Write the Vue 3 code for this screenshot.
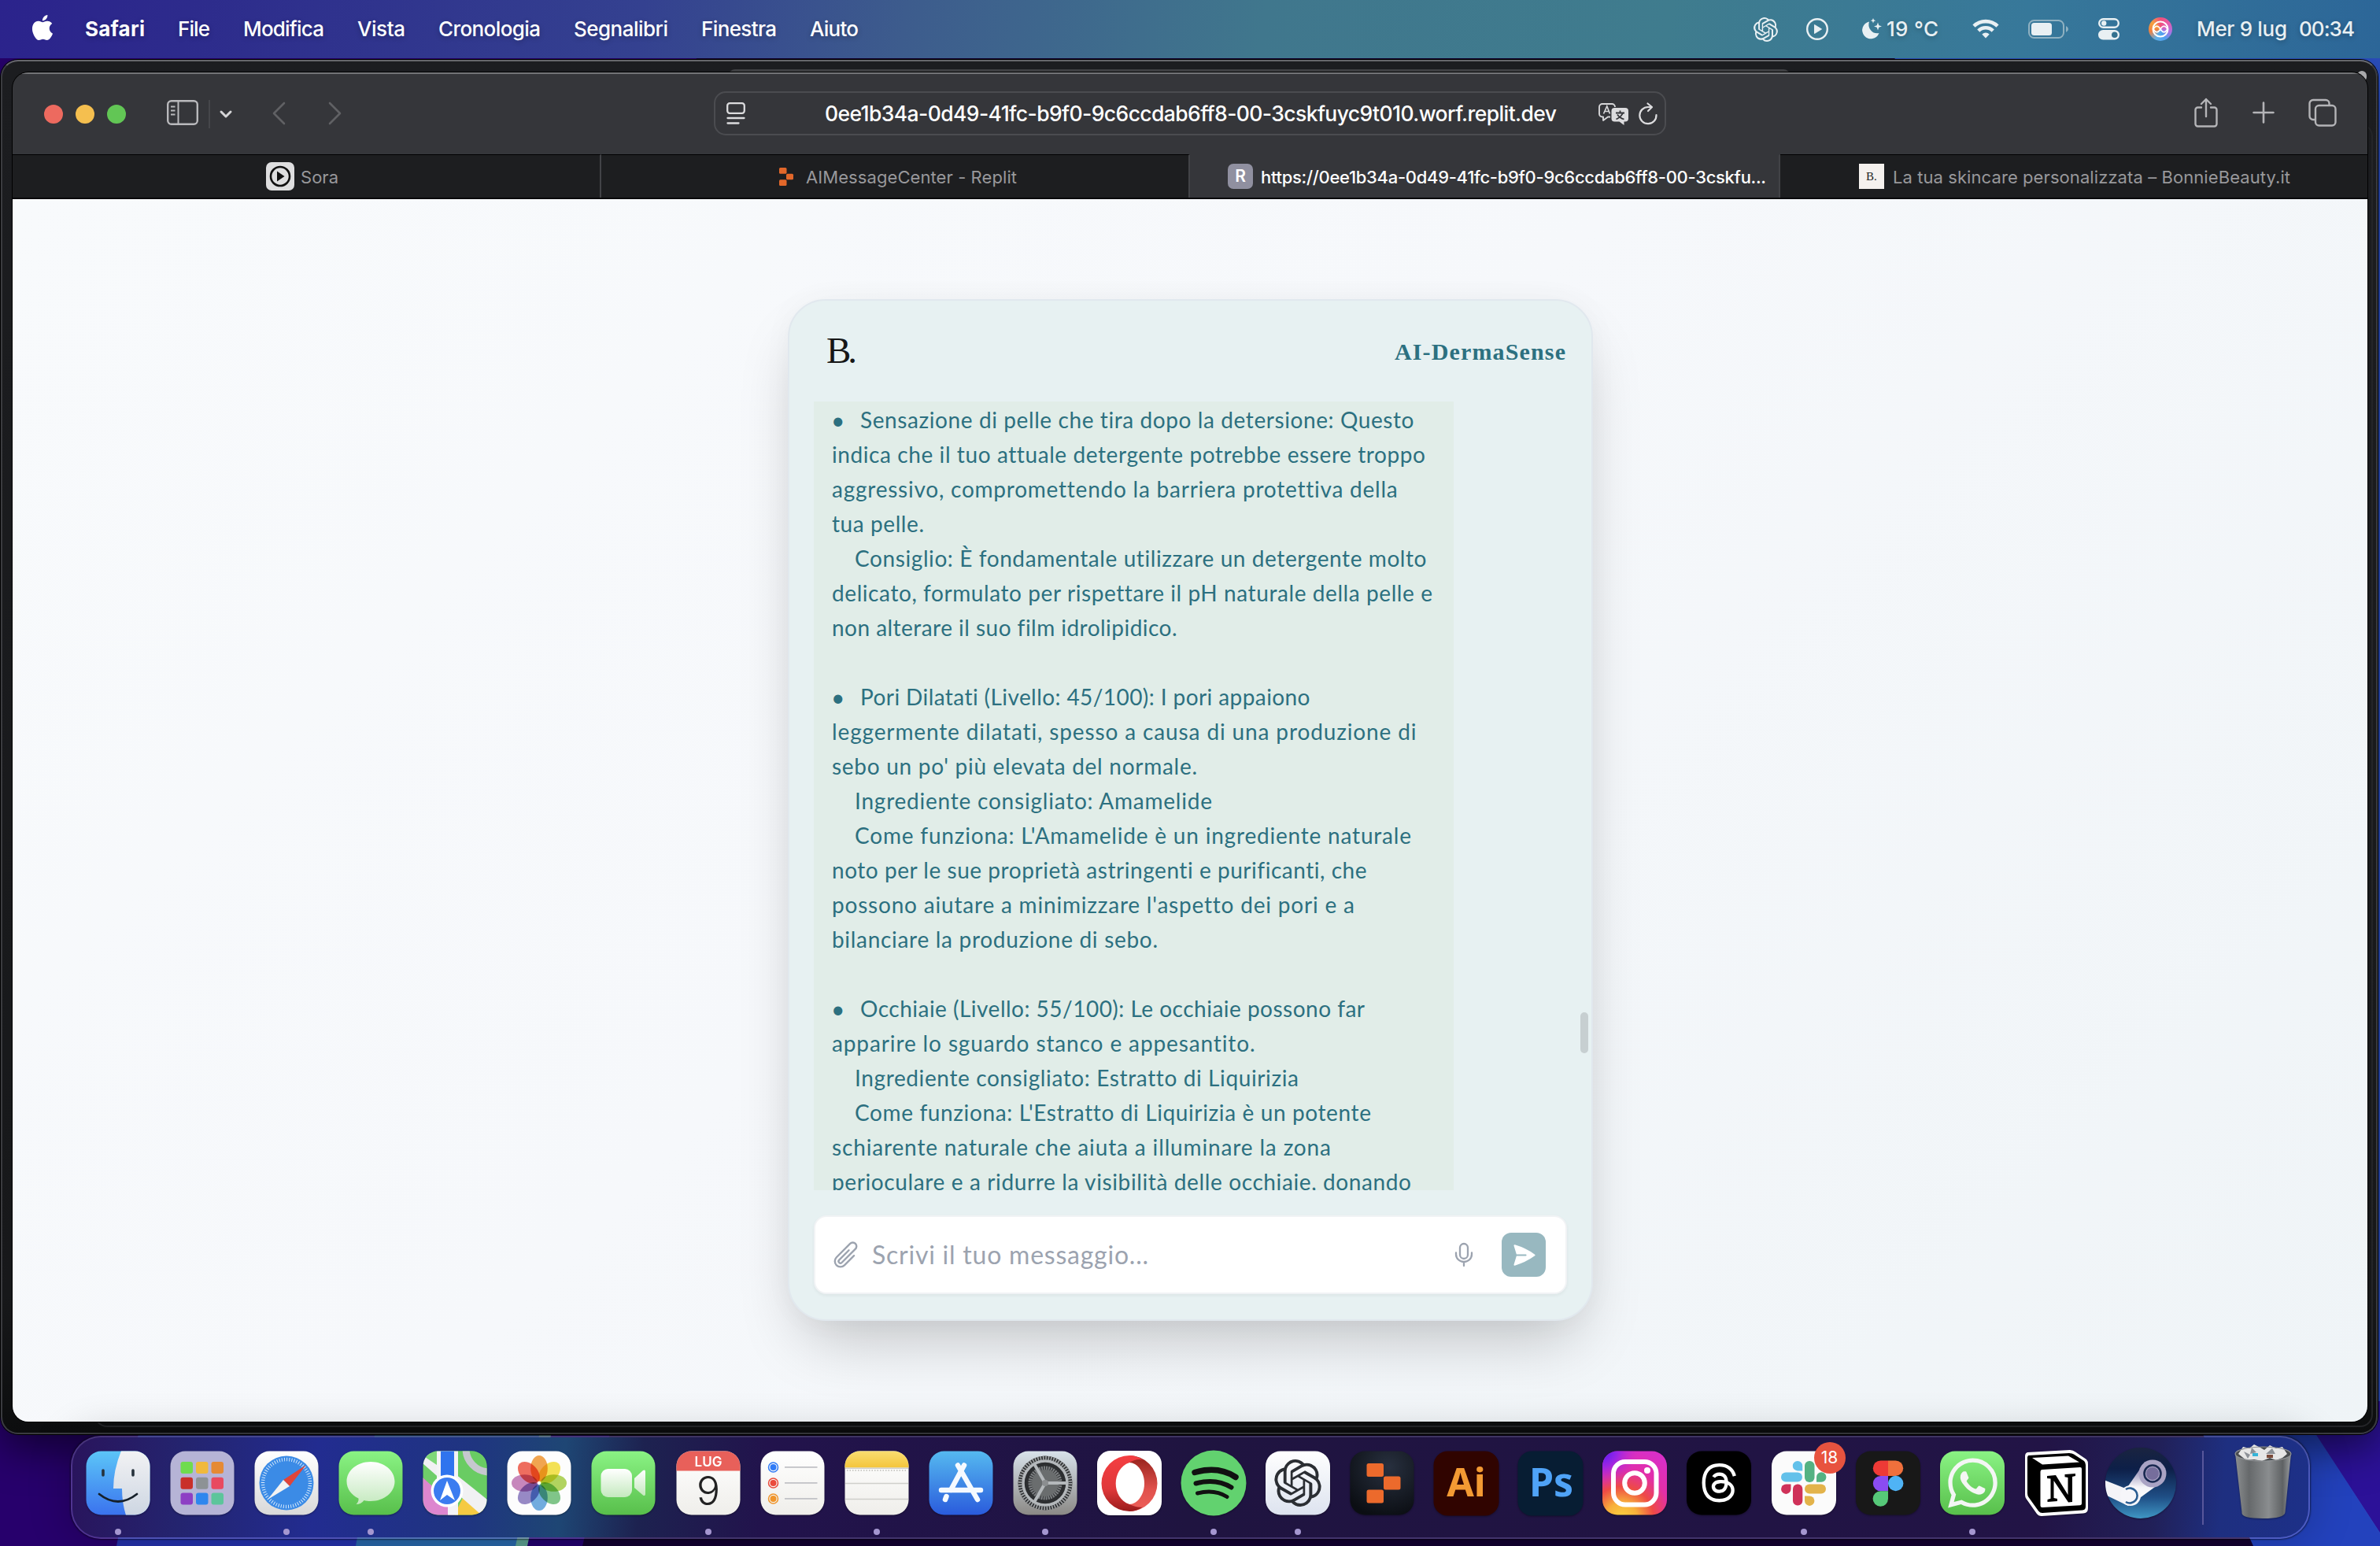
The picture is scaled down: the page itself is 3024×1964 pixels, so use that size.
<script setup>
// Stretches a text run to an exact width by spreading the difference between its letters.
const vFit = {
  mounted(el, { value }) {
    const natural = el.getBoundingClientRect().width
    const gaps = Math.max(1, el.textContent.length - 1)
    el.style.letterSpacing = (value - natural) / gaps + 'px'
    el.style.width = value + 'px'
  },
}

const menus = [
  { t: 'File', w: 41 },
  { t: 'Modifica', w: 103 },
  { t: 'Vista', w: 61 },
  { t: 'Cronologia', w: 130 },
  { t: 'Segnalibri', w: 120 },
  { t: 'Finestra', w: 96 },
  { t: 'Aiuto', w: 62 },
]

const lines = [
  { b: true, t: 'Sensazione di pelle che tira dopo la detersione: Questo', w: 704 },
  { t: 'indica che il tuo attuale detergente potrebbe essere troppo', w: 753 },
  { t: 'aggressivo, compromettendo la barriera protettiva della', w: 717 },
  { t: 'tua pelle.', w: 117 },
  { i: true, t: 'Consiglio: È fondamentale utilizzare un detergente molto', w: 727 },
  { t: 'delicato, formulato per rispettare il pH naturale della pelle e', w: 762 },
  { t: 'non alterare il suo film idrolipidico.', w: 438 },
  null,
  { b: true, t: 'Pori Dilatati (Livello: 45/100): I pori appaiono', w: 572 },
  { t: 'leggermente dilatati, spesso a causa di una produzione di', w: 743 },
  { t: "sebo un po' più elevata del normale.", w: 464 },
  { i: true, t: 'Ingrediente consigliato: Amamelide', w: 454 },
  { i: true, t: "Come funziona: L'Amamelide è un ingrediente naturale", w: 707 },
  { t: 'noto per le sue proprietà astringenti e purificanti, che', w: 680 },
  { t: "possono aiutare a minimizzare l'aspetto dei pori e a", w: 663 },
  { t: 'bilanciare la produzione di sebo.', w: 414 },
  null,
  { b: true, t: 'Occhiaie (Livello: 55/100): Le occhiaie possono far', w: 641 },
  { t: 'apparire lo sguardo stanco e appesantito.', w: 538 },
  { i: true, t: 'Ingrediente consigliato: Estratto di Liquirizia', w: 563 },
  { i: true, t: "Come funziona: L'Estratto di Liquirizia è un potente", w: 655 },
  { t: 'schiarente naturale che aiuta a illuminare la zona', w: 634 },
  { t: 'perioculare e a ridurre la visibilità delle occhiaie, donando', w: 736 },
]

const launchTiles = ['#6fdc4e', '#f0b93c', '#e58a35', '#c9302a', '#8d9295', '#e84a60', '#8d3fc4', '#2e86ee', '#5cc59b']
const petals = ['#f29a38', '#f4df3e', '#a9cf4a', '#6fbf7a', '#5fa3dc', '#8a7ac0', '#c277b5', '#ee5a4a']
const reminders = ['#2f7bf6', '#ea4b3c', '#f0952b']

const gptPath = 'M22.2819 9.8211a5.9847 5.9847 0 0 0-.5157-4.9108 6.0462 6.0462 0 0 0-6.5098-2.9A6.0651 6.0651 0 0 0 4.9807 4.1818a5.9847 5.9847 0 0 0-3.9977 2.9 6.0462 6.0462 0 0 0 .7427 7.0966 5.98 5.98 0 0 0 .511 4.9107 6.051 6.051 0 0 0 6.5146 2.9001A5.9847 5.9847 0 0 0 13.2599 24a6.0557 6.0557 0 0 0 5.7718-4.2058 5.9894 5.9894 0 0 0 3.9977-2.9001 6.0557 6.0557 0 0 0-.7475-7.0729zm-9.022 12.6081a4.4755 4.4755 0 0 1-2.8764-1.0408l.1419-.0804 4.7783-2.7582a.7948.7948 0 0 0 .3927-.6813v-6.7369l2.02 1.1686a.071.071 0 0 1 .038.052v5.5826a4.504 4.504 0 0 1-4.4945 4.4944zm-9.6607-4.1254a4.4708 4.4708 0 0 1-.5346-3.0137l.142.0852 4.783 2.7582a.7712.7712 0 0 0 .7806 0l5.8428-3.3685v2.3324a.0804.0804 0 0 1-.0332.0615L9.74 19.9502a4.4992 4.4992 0 0 1-6.1408-1.6464zM2.3408 7.8956a4.485 4.485 0 0 1 2.3655-1.9728V11.6a.7664.7664 0 0 0 .3879.6765l5.8144 3.3543-2.0201 1.1685a.0757.0757 0 0 1-.071 0l-4.8303-2.7865A4.504 4.504 0 0 1 2.3408 7.872zm16.5963 3.8558L13.1038 8.364 15.1192 7.2a.0757.0757 0 0 1 .071 0l4.8303 2.7913a4.4944 4.4944 0 0 1-.6765 8.1042v-5.6772a.79.79 0 0 0-.407-.667zm2.0107-3.0231l-.142-.0852-4.7735-2.7818a.7759.7759 0 0 0-.7854 0L9.409 9.2297V6.8974a.0662.0662 0 0 1 .0284-.0615l4.8303-2.7866a4.4992 4.4992 0 0 1 6.6802 4.66zM8.3065 12.863l-2.02-1.1638a.0804.0804 0 0 1-.038-.0567V6.0742a4.4992 4.4992 0 0 1 7.3757-3.4537l-.142.0805L8.704 5.459a.7948.7948 0 0 0-.3927.6813zm1.0976-2.3654l2.602-1.4998 2.6069 1.4998v2.9994l-2.5974 1.4997-2.6067-1.4997Z'
</script>

<template>
  <div class="desktop">
    <svg class="wallpaper" viewBox="0 0 3024 1964" width="3024" height="1964">
      <rect width="3024" height="1964" fill="#120030" />
      <path d="M0 0H900L500 1964H0Z" fill="#27006c" />
      <path d="M740 1964L780 1800H600L620 1964Z" fill="#23006c" />
      <path d="M148 1964L180 1800H500L455 1964Z" fill="#2431a8" />
      <path d="M452 1964L480 1800H700L662 1964Z" fill="#2765a6" />
      <path d="M655 1964L690 1800H705L670 1964Z" fill="#5a9c8e" />
      <path d="M2400 0H3024V1964H2600Z" fill="#2b4fc0" />
      <path d="M2200 1700H2880V1964H2200Z" fill="#130030" />
      <path d="M2863 1964L2780 1780H2915L3024 1948V1964Z" fill="#2342bd" />
      <path d="M2915 1780H3024V1947Z" fill="#2c1198" />
    </svg>

    <div class="back-window"><i class="back-field"></i><i class="back-knob"></i></div>
    <div class="mid-window"></div>

    <header class="menubar">
      <svg class="apple" viewBox="0 0 24 24"><path fill="#fff" d="M12.152 6.896c-.948 0-2.415-1.078-3.96-1.04-2.04.027-3.91 1.183-4.961 3.014-2.117 3.675-.546 9.103 1.519 12.09 1.013 1.454 2.208 3.09 3.792 3.039 1.52-.065 2.09-.987 3.935-.987 1.831 0 2.35.987 3.96.948 1.637-.026 2.676-1.48 3.676-2.948 1.156-1.688 1.636-3.325 1.662-3.415-.039-.013-3.182-1.221-3.22-4.857-.026-3.04 2.48-4.494 2.597-4.559-1.429-2.09-3.623-2.324-4.39-2.376-2-.156-3.675 1.09-4.61 1.09zM15.53 3.83c.843-1.012 1.4-2.427 1.245-3.83-1.207.052-2.662.805-3.532 1.818-.78.896-1.454 2.338-1.273 3.714 1.338.104 2.715-.688 3.559-1.701" /></svg>
      <nav class="menus">
        <span v-fit="76" class="fit bold">Safari</span>
        <span v-for="m in menus" :key="m.t" v-fit="m.w" class="fit">{{ m.t }}</span>
      </nav>
      <div class="status">
        <svg class="s-gpt" viewBox="0 0 24 24" fill="#e9f0f3"><path :d="gptPath" /></svg>
        <svg class="s-play" viewBox="0 0 28 28"><circle cx="14" cy="14" r="12.8" fill="none" stroke="#e9f0f3" stroke-width="2.4" /><path d="M10.5 8.5v11l9-5.500z" fill="#e9f0f3" stroke="#e9f0f3" stroke-linejoin="round" /></svg>
        <svg class="s-moon" viewBox="0 0 28 28" fill="#e9f0f3"><path d="M10 4.500A11 11 0 1 0 22.500 19A11 11 0 0 1 10 4.500Z" /><path d="M21 5.500l1.300 3.700 3.700 1.300-3.700 1.300-1.300 3.700-1.300-3.700-3.700-1.300 3.700-1.300zM15 0l.9 2.300 2.300.9-2.300.9-.9 2.300-.9-2.300-2.300-.9 2.300-.9z" /></svg>
        <span v-fit="66" class="fit temp">19 °C</span>
        <svg class="s-wifi" viewBox="0 0 34 26" fill="none" stroke="#e9f0f3" stroke-width="4.600"><path d="M2 9.200A21.500 21.500 0 0 1 32 9.200" /><path d="M7.800 15A13 13 0 0 1 26.200 15" /><path d="M12.300 19.600Q17 15.400 21.700 19.600L17 24.600Z" fill="#e9f0f3" stroke="none" /></svg>
        <svg class="s-batt" viewBox="0 0 52 24"><rect x="1" y="1" width="44" height="22" rx="6.500" fill="none" stroke="#8fb1c1" stroke-width="2" /><rect x="4" y="4" width="26" height="16" rx="3.500" fill="#e9f0f3" /><path d="M48 8q3 1.500 3 4t-3 4z" fill="#8fb1c1" /></svg>
        <svg class="s-cc" viewBox="0 0 27 28"><rect x="1.200" y="1.200" width="24.600" height="10.600" rx="5.300" fill="none" stroke="#e9f0f3" stroke-width="2.400" /><circle cx="7.200" cy="6.500" r="3.200" fill="#e9f0f3" /><rect y="15" width="27" height="12.500" rx="6.200" fill="#e9f0f3" /><circle cx="20.800" cy="21.200" r="3.800" fill="#33718f" /></svg>
        <span class="s-siri"><svg viewBox="0 0 30 30" fill="none" stroke="#fff" stroke-width="2"><circle cx="15" cy="15" r="9.500" /><path d="M6 15c3-5 6-5 9 0s6 5 9 0c-3-5-6-5-9 0s-6 5-9 0z" stroke-width="1.600" /></svg></span>
        <span v-fit="115" class="fit date">Mer 9 lug</span>
        <span v-fit="71" class="fit time">00:34</span>
      </div>
    </header>

    <main class="window">
      <div class="toolbar">
        <i class="light red"></i><i class="light yellow"></i><i class="light green"></i>
        <svg class="t-side" viewBox="0 0 40 32" fill="none" stroke="#b9b9bc" stroke-width="2.400"><rect x="1.200" y="1.200" width="37.600" height="29.600" rx="4.500" /><path d="M14.500 1v30M5 8.500h5.500M5 13.500h5.500M5 18.500h5.500" stroke-width="2" /></svg>
        <i class="t-div"></i>
        <svg class="t-chev" viewBox="0 0 16 10" fill="none" stroke="#d5d5d7" stroke-width="3" stroke-linecap="round" stroke-linejoin="round"><path d="M2 2l6 6 6-6" /></svg>
        <svg class="t-back" viewBox="0 0 18 30" fill="none" stroke="#606164" stroke-width="2.600" stroke-linecap="round" stroke-linejoin="round"><path d="M16 2L3 15l13 13" /></svg>
        <svg class="t-fwd" viewBox="0 0 18 30" fill="none" stroke="#606164" stroke-width="2.600" stroke-linecap="round" stroke-linejoin="round"><path d="M2 2l13 13L2 28" /></svg>
        <div class="address">
          <svg class="a-page" viewBox="0 0 24 28" fill="none" stroke="#dcdcde" stroke-width="2.300" stroke-linecap="round"><rect x="1.200" y="1.200" width="21.600" height="12.600" rx="3" /><path d="M1.500 20h21M1.500 26.500h14" /></svg>
          <span v-fit="930" class="fit url">0ee1b34a-0d49-41fc-b9f0-9c6ccdab6ff8-00-3cskfuyc9t010.worf.replit.dev</span>
          <svg class="a-trans" viewBox="0 0 39 29" fill="none"><path d="M15 17.500H12l-6 4.500v-4.500H5a4 4 0 0 1-4-4V5a4 4 0 0 1 4-4h12a4 4 0 0 1 4 4" stroke="#d6d6d8" stroke-width="1.900" stroke-linejoin="round" /><path d="M6.500 13.500L10.800 4l3.700 9.500M8 10.500h5.500" stroke="#d6d6d8" stroke-width="1.700" /><path d="M20.500 6H34a4 4 0 0 1 4 4v9.500a4 4 0 0 1-4 4h-1.500V28l-6-4.500h-6a4 4 0 0 1-4-4V10a4 4 0 0 1 4-4z" fill="#dcdcde" /><path d="M22 12.500h11M27.500 9.500v3M31 12.500q-2 5-8.500 8M24 14.500q3 4.500 8.500 6" stroke="#35363a" stroke-width="1.800" /></svg>
          <svg class="a-reload" viewBox="0 0 24 28" fill="none" stroke="#dcdcde" stroke-width="2.200" stroke-linecap="round" stroke-linejoin="round"><path d="M22.500 16A10.600 10.600 0 1 1 12 6h4.500M11.500 1.500L17 6l-5 5" /></svg>
        </div>
        <svg class="t-share" viewBox="0 0 30 38" fill="none" stroke="#b4b4b7" stroke-width="2.400" stroke-linecap="round" stroke-linejoin="round"><path d="M9 12.500H4.500a3 3 0 0 0-3 3v18a3 3 0 0 0 3 3h21a3 3 0 0 0 3-3v-18a3 3 0 0 0-3-3H21M15 24V2M9 8l6-6 6 6" /></svg>
        <svg class="t-plus" viewBox="0 0 28 28" stroke="#b4b4b7" stroke-width="2.600" stroke-linecap="round"><path d="M14 1.500v25M1.500 14h25" /></svg>
        <svg class="t-tabs" viewBox="0 0 36 36" fill="none" stroke="#b4b4b7" stroke-width="2.400"><path d="M9 27H6a4.500 4.500 0 0 1-4.500-4.500v-16A4.500 4.500 0 0 1 6 2h16a4.500 4.500 0 0 1 4.500 4.500V9" /><rect x="9" y="9" width="25.500" height="25.500" rx="4.500" /></svg>
      </div>

      <div class="tabs">
        <div class="tab t1">
          <svg class="fav36" viewBox="0 0 36 36"><rect width="36" height="36" rx="7" fill="#dededf" /><circle cx="18" cy="18" r="12" fill="none" stroke="#111" stroke-width="2.600" /><path d="M14 11.500v13l9.500-6.500z" fill="#111" /></svg>
          <span v-fit="48" class="fit">Sora</span>
        </div>
        <div class="tab t2">
          <svg class="fav-replit" viewBox="0 0 18 23" fill="#e2672a"><rect width="9.500" height="7.700" rx="1.500" /><rect x="9" y="7.700" width="9" height="7.600" rx="1.500" /><rect y="15.300" width="9.500" height="7.700" rx="1.500" /></svg>
          <span v-fit="268" class="fit">AIMessageCenter - Replit</span>
        </div>
        <div class="tab t3">
          <b class="fav-r">R</b>
          <span v-fit="642" class="fit">https://0ee1b34a-0d49-41fc-b9f0-9c6ccdab6ff8-00-3cskfu...</span>
        </div>
        <div class="tab t4">
          <i class="fav-b">B.</i>
          <span v-fit="505" class="fit">La tua skincare personalizzata – BonnieBeauty.it</span>
        </div>
      </div>

      <section class="page">
        <article class="card">
          <div class="card-head">
            <span v-fit="39" class="fit logo">B.</span>
            <span v-fit="217" class="fit brand">AI-DermaSense</span>
          </div>
          <div class="scroller">
            <div class="bubble">
              <div v-for="(l, k) in lines" :key="k" class="line" :class="{ indent: l && l.i }">
                <template v-if="l"><span v-if="l.b" class="bullet">•</span><span v-fit="l.w" class="fit">{{ l.t }}</span></template>
              </div>
            </div>
            <i class="thumb"></i>
          </div>
          <div class="composer">
            <svg class="clip" viewBox="0 0 24 24" fill="none" stroke="#9ca3af" stroke-width="1.500" stroke-linecap="round" stroke-linejoin="round"><path d="m18.375 12.739-7.693 7.693a4.500 4.500 0 0 1-6.364-6.364l10.940-10.940A3 3 0 1 1 19.500 7.372L8.552 18.320m.009-.010-.010.010m5.699-9.941-7.810 7.810a1.500 1.500 0 0 0 2.112 2.130" /></svg>
            <span v-fit="351" class="fit placeholder">Scrivi il tuo messaggio...</span>
            <svg class="mic" viewBox="0 0 24 32" fill="none" stroke="#9ca3af" stroke-width="2.300" stroke-linecap="round"><rect x="7" y="2" width="10" height="19" rx="5" /><path d="M2 13.500v2a10 9.500 0 0 0 20 0v-2M12 25v5" /></svg>
            <div class="send"><svg viewBox="0 0 24 24" fill="#fff"><path d="M3.478 2.404a.75.75 0 0 0-.926.941l2.432 7.905H13.500a.75.75 0 0 1 0 1.500H4.984l-2.432 7.905a.75.75 0 0 0 .926.940 60.519 60.519 0 0 0 18.445-8.986.75.75 0 0 0 0-1.218A60.517 60.517 0 0 0 3.478 2.404Z" /></svg></div>
          </div>
        </article>
      </section>
    </main>

    <footer class="dock">
      <svg width="0" height="0" class="defs">
        <defs>
          <linearGradient id="gFind" x2="0" y2="1"><stop stop-color="#5cc6f8" /><stop offset="1" stop-color="#3a72ee" /></linearGradient>
          <linearGradient id="gGrey" x2="0" y2="1"><stop stop-color="#f2f2f4" /><stop offset="1" stop-color="#cdd6e2" /></linearGradient>
          <linearGradient id="gGreen" x2="0" y2="1"><stop stop-color="#8af384" /><stop offset="1" stop-color="#58bf4b" /></linearGradient>
          <linearGradient id="gWhite" x2="0" y2="1"><stop stop-color="#fff" /><stop offset="1" stop-color="#d9d9d9" /></linearGradient>
          <linearGradient id="gPaper" x2="0" y2="1"><stop stop-color="#fff" /><stop offset="1" stop-color="#efeeea" /></linearGradient>
          <linearGradient id="gBubble" x2="0" y2="1"><stop stop-color="#fff" /><stop offset="1" stop-color="#c4e9be" /></linearGradient>
          <linearGradient id="gStore" x2="0" y2="1"><stop stop-color="#55b9f0" /><stop offset="1" stop-color="#2a5bdc" /></linearGradient>
          <linearGradient id="gYellow" x2="0" y2="1"><stop stop-color="#fade72" /><stop offset="1" stop-color="#f4c53c" /></linearGradient>
          <linearGradient id="gGear" x2="0" y2="1"><stop stop-color="#d8e2ea" /><stop offset="1" stop-color="#8b8986" /></linearGradient>
          <linearGradient id="gGpt" x2="0" y2="1"><stop stop-color="#fff" /><stop offset="1" stop-color="#dde3ef" /></linearGradient>
          <linearGradient id="gOperaL" x2="0" y2="1"><stop stop-color="#f43e42" /><stop offset=".6" stop-color="#e0383a" /><stop offset="1" stop-color="#9a1c1c" /></linearGradient>
          <linearGradient id="gOperaR" x2="0" y2="1"><stop stop-color="#93201a" /><stop offset=".6" stop-color="#e0514c" /><stop offset="1" stop-color="#ee605a" /></linearGradient>
          <radialGradient id="gReplit" cx=".6" cy=".25" r=".8"><stop stop-color="#28303f" /><stop offset="1" stop-color="#0b0e13" /></radialGradient>
          <radialGradient id="gIgA" cx=".3" cy="1.050" r="1.100"><stop stop-color="#fbd33f" /><stop offset=".22" stop-color="#f8b03b" /><stop offset=".45" stop-color="#ee4a45" /><stop offset=".7" stop-color="#e22fa8" /><stop offset="1" stop-color="#d92fc6" /></radialGradient>
          <radialGradient id="gIgB" cx="0" cy="0" r=".6"><stop stop-color="#4a1cf5" /><stop offset=".4" stop-color="#8a22f0" stop-opacity=".8" /><stop offset="1" stop-color="#d92fc6" stop-opacity="0" /></radialGradient>
          <linearGradient id="gSteam" x2="0" y2="1"><stop stop-color="#1a2440" /><stop offset=".3" stop-color="#0d1f48" /><stop offset=".7" stop-color="#1f4f86" /><stop offset="1" stop-color="#3f96c4" /></linearGradient>
          <linearGradient id="gArm" x2="0" y2="1"><stop stop-color="#8d86b0" /><stop offset=".6" stop-color="#f4f4f8" /><stop offset="1" stop-color="#fff" /></linearGradient>
          <linearGradient id="gCan" x2="1" y2="0"><stop stop-color="#8c8f91" /><stop offset=".25" stop-color="#66696b" /><stop offset=".6" stop-color="#8a8d8f" /><stop offset=".85" stop-color="#5f6264" /><stop offset="1" stop-color="#9a9da0" /></linearGradient>
          <clipPath id="sq"><rect x=".5" y=".5" width="81" height="81" rx="19" /></clipPath>
          <clipPath id="round"><circle cx="41" cy="41" r="45" /></clipPath>
        </defs>
      </svg>

      <div class="app on">
        <svg viewBox="0 0 82 82"><g clip-path="url(#sq)"><rect width="82" height="82" fill="url(#gFind)" /><path d="M45 0Q35 25 35 48H46Q46 66 51 82H82V0Z" fill="url(#gGrey)" /></g><path d="M22 25v6M60 25v6" stroke="#26323c" stroke-width="3.600" stroke-linecap="round" /><path d="M17 55Q41 74 65 55" fill="none" stroke="#16202a" stroke-width="2.800" stroke-linecap="round" /></svg>
      </div>
      <div class="app">
        <svg viewBox="0 0 82 82"><rect x=".5" y=".5" width="81" height="81" rx="19" fill="#b6b4d6" /><rect v-for="(c, k) in launchTiles" :key="k" :x="13.500 + (k % 3) * 19.500" :y="14 + Math.floor(k / 3) * 19.700" width="15.500" height="15" rx="3" :fill="c" /></svg>
      </div>
      <div class="app on">
        <svg viewBox="0 0 82 82"><rect x=".5" y=".5" width="81" height="81" rx="19" fill="url(#gWhite)" /><circle cx="41" cy="41" r="34.500" fill="#3b8be6" /><circle cx="41" cy="41" r="30" fill="none" stroke="#d5e8fb" stroke-width="4.500" stroke-dasharray="1 2.140" /><path d="M66 18L45 45 37 37Z" fill="#e0443a" /><path d="M17 62L37 37l8 8Z" fill="#f2f2f2" /></svg>
      </div>
      <div class="app on">
        <svg viewBox="0 0 82 82"><rect x=".5" y=".5" width="81" height="81" rx="19" fill="url(#gGreen)" /><path d="M41 14c17 0 30.500 11 30.500 25S58 64 41 64c-3 0-6-.4-8.500-1-2 3-6 5-10 5 2-2 3.500-4.500 3-7.500C16 56 10.500 48 10.500 39 10.500 25 24 14 41 14z" fill="url(#gBubble)" /></svg>
      </div>
      <div class="app">
        <svg viewBox="0 0 82 82"><g clip-path="url(#sq)"><rect width="82" height="82" fill="#6fce69" /><path d="M0 34L40 70V82H0Z" fill="#dd86cf" /><path d="M40 82L52 58 82 78V82Z" fill="#f5ca42" /><path d="M0 16L82 88V62L0 -4Z" fill="#f1f1f3" /><path d="M0 0H18V18L0 6Z" fill="#7fd878" /><path d="M18 0H45V82H32V50H18Z" fill="#f4f4f6" /><path d="M45 0H82V60L45 32Z" fill="#69cc63" /><path d="M55 -4A30 30 0 0 0 84 27" fill="none" stroke="#c6c8cf" stroke-width="9" /><path d="M23 0H40V50H23Z" fill="#2f74ee" /></g><circle cx="31" cy="51" r="20.500" fill="#fff" /><circle cx="31" cy="51" r="17" fill="#3b7cf0" /><path d="M31 38L41 63 31 56 22 63Z" fill="#fff" /></svg>
      </div>
      <div class="app">
        <svg viewBox="0 0 82 82"><rect x=".5" y=".5" width="81" height="81" rx="19" fill="#fdfdfd" /><ellipse v-for="(c, k) in petals" :key="c" cx="41" cy="22.500" rx="10.800" ry="16.500" :fill="c" class="petal" :transform="`rotate(${k * 45} 41 41)`" /></svg>
      </div>
      <div class="app">
        <svg viewBox="0 0 82 82"><rect x=".5" y=".5" width="81" height="81" rx="19" fill="url(#gGreen)" /><rect x="12.500" y="23" width="39.500" height="36" rx="9" fill="url(#gBubble)" /><path d="M55 35L66 25q3-1.500 3 1.500V55q0 3-3 1.500L55 47Z" fill="url(#gBubble)" /></svg>
      </div>
      <div class="app on">
        <svg viewBox="0 0 82 82"><g clip-path="url(#sq)"><rect width="82" height="82" fill="url(#gPaper)" /><rect width="82" height="25.500" fill="#e8605a" /></g><text x="41" y="19.500" text-anchor="middle" class="cal-m">LUG</text><text x="41" y="69" text-anchor="middle" class="cal-d">9</text></svg>
      </div>
      <div class="app">
        <svg viewBox="0 0 82 82"><rect x=".5" y=".5" width="81" height="81" rx="19" fill="url(#gPaper)" /><g v-for="(c, k) in reminders" :key="c"><circle cx="16.500" :cy="21 + k * 20" r="6" fill="none" :stroke="c" stroke-width="1.500" /><circle cx="16.500" :cy="21 + k * 20" r="4" :fill="c" /><rect x="31" :y="20 + k * 20" width="41.500" height="1.800" fill="#c2c3c7" /></g></svg>
      </div>
      <div class="app on">
        <svg viewBox="0 0 82 82"><g clip-path="url(#sq)"><rect width="82" height="82" fill="url(#gPaper)" /><rect width="82" height="21.500" fill="url(#gYellow)" /></g><path d="M1 22.200h80M1 41.500h80M1 61.500h80" stroke="#cfcfcb" stroke-width="1.600" /><path d="M3 25h76" stroke="#bdbdb8" stroke-width="1.600" stroke-dasharray="1.500 2" /></svg>
      </div>
      <div class="app">
        <svg viewBox="0 0 82 82" stroke="#f5faff" stroke-width="6.500" stroke-linecap="round"><rect x=".5" y=".5" width="81" height="81" rx="19" fill="url(#gStore)" stroke="none" /><path d="M45 18.500L28 50M16 50H66M37 18.500L62 62M22.500 58L21 62" /></svg>
      </div>
      <div class="app on">
        <svg viewBox="0 0 82 82" fill="none"><rect x=".5" y=".5" width="81" height="81" rx="19" fill="url(#gGear)" /><circle cx="41" cy="41" r="34.500" fill="#2c2e30" /><circle cx="41" cy="41" r="32" stroke="#9fa2a4" stroke-width="5" stroke-dasharray="1.700 1.650" /><circle cx="41" cy="41" r="28" stroke="#b4b8bb" stroke-width="3.500" /><circle cx="41" cy="41" r="19" stroke="#7b7e80" stroke-width="5" stroke-dasharray="2 1" /><circle cx="41" cy="41" r="17" fill="#6a6d6e" /><path d="M41 41H68M41 41L27.500 17.500M41 41L27.500 64.500" stroke="#b4b8bb" stroke-width="4" /><circle cx="41" cy="41" r="4" fill="#8b8e90" /></svg>
      </div>
      <div class="app">
        <svg viewBox="0 0 82 82"><rect x="0" y="0" width="82" height="82" rx="17" fill="#fff" /><path fill="url(#gOperaR)" d="M41 6A35.500 35.500 0 0 1 41 77L34 66Q41 70 48 66C64 56 64 27 48 17Q41 13 34 17Z" /><path fill="url(#gOperaL)" d="M41 6a35.500 35.500 0 0 0 0 71Q50 77 58 71.500 50 72.500 41 68C18 60 18 23 41 15Q50 9.500 58 11.500 50 6 41 6z" /></svg>
      </div>
      <div class="app on">
        <svg viewBox="0 0 82 82" fill="none" stroke="#111" stroke-linecap="round"><circle cx="41" cy="41" r="41.500" fill="#62d26f" stroke="none" /><path d="M17 27.500Q47 19 69 33.500" stroke-width="7.500" /><path d="M18.500 41.500Q44 34.500 63.500 46.500" stroke-width="6" /><path d="M20.500 54Q42 48.500 58 58.500" stroke-width="5" /></svg>
      </div>
      <div class="app on">
        <svg viewBox="0 0 82 82"><rect x="0" y=".5" width="82" height="81" rx="19" fill="url(#gGpt)" /><path :d="gptPath" transform="translate(11 11) scale(2.500)" fill="#2b2e33" /></svg>
      </div>
      <div class="app">
        <svg viewBox="0 0 82 82"><rect x=".5" y=".5" width="81" height="81" rx="19" fill="url(#gReplit)" /><g fill="#ec6a2c"><rect x="21.500" y="16" width="21.500" height="17" rx="2.500" /><rect x="43" y="32.500" width="21.500" height="17" rx="2.500" /><rect x="21.500" y="49.500" width="21.500" height="17" rx="2.500" /></g></svg>
      </div>
      <div class="app">
        <svg viewBox="0 0 82 82"><rect x="-.5" y=".5" width="83" height="82" rx="18" fill="#300400" /><text x="41" y="57.500" text-anchor="middle" class="adobe" fill="#f39a33">Ai</text></svg>
      </div>
      <div class="app">
        <svg viewBox="0 0 82 82"><rect x="-.5" y=".5" width="83" height="82" rx="18" fill="#071d33" /><text x="42" y="57.500" text-anchor="middle" class="adobe" fill="#4fa3f7">Ps</text></svg>
      </div>
      <div class="app">
        <svg viewBox="0 0 82 82"><rect x="0" y=".5" width="82" height="81" rx="19" fill="url(#gIgA)" /><rect x="0" y=".5" width="82" height="81" rx="19" fill="url(#gIgB)" /><g fill="none" stroke="#fff" stroke-width="6"><rect x="14" y="14" width="54.500" height="54.500" rx="15" /><circle cx="41" cy="41" r="12.800" /></g><circle cx="57" cy="25" r="4" fill="#fff" /></svg>
      </div>
      <div class="app">
        <svg viewBox="0 0 82 82"><rect x="0" y=".5" width="82" height="81" rx="19" fill="#000" /><path transform="translate(16.500 16) scale(2.060)" fill="#fff" d="M12.186 24h-.007c-3.581-.024-6.334-1.205-8.184-3.509C2.350 18.440 1.500 15.586 1.472 12.010v-.017c.030-3.579.879-6.430 2.525-8.482C5.845 1.205 8.600.024 12.180 0h.014c2.746.020 5.043.725 6.826 2.098 1.677 1.290 2.858 3.130 3.509 5.467l-2.040.569c-1.104-3.960-3.898-5.984-8.304-6.015-2.910.022-5.110.936-6.540 2.717C4.307 6.504 3.616 8.914 3.589 12c.027 3.086.718 5.496 2.057 7.164 1.430 1.783 3.631 2.698 6.540 2.717 2.623-.020 4.358-.631 5.800-2.045 1.647-1.613 1.618-3.593 1.090-4.798-.310-.710-.873-1.300-1.634-1.750-.192 1.352-.622 2.446-1.284 3.272-.886 1.102-2.140 1.704-3.730 1.790-1.202.065-2.361-.218-3.259-.801-1.063-.689-1.685-1.740-1.752-2.964-.065-1.190.408-2.285 1.330-3.082.880-.760 2.119-1.207 3.583-1.291a13.853 13.853 0 0 1 3.020.142c-.126-.742-.375-1.332-.750-1.757-.513-.586-1.308-.883-2.359-.890h-.029c-.844 0-1.992.232-2.721 1.320L7.734 7.847c.980-1.454 2.568-2.256 4.478-2.256h.044c3.194.020 5.097 1.975 5.287 5.388.108.046.216.094.321.142 1.490.700 2.580 1.761 3.154 3.070.797 1.820.871 4.790-1.548 7.158-1.850 1.810-4.094 2.628-7.277 2.650Zm1.003-11.690c-.242 0-.487.007-.739.021-1.836.103-2.980.946-2.916 2.143.067 1.256 1.452 1.839 2.784 1.767 1.224-.065 2.818-.543 3.086-3.710a10.500 10.500 0 0 0-2.215-.221z" /></svg>
      </div>
      <div class="app on">
        <svg viewBox="0 0 82 82"><rect x="0" y=".5" width="82" height="81" rx="19" fill="#fbfbfb" /><g fill="#63c1ea"><path d="M33 13a6.200 6.200 0 0 0 0 12.400h6.200V19.200A6.200 6.200 0 0 0 33 13z" /><rect x="12" y="27.500" width="27" height="12" rx="6" /></g><g fill="#54b283"><rect x="42" y="13" width="12.500" height="27" rx="6" /><path d="M57 33.500a6.200 6.200 0 1 1 6.200 6.200H57z" /></g><g fill="#cf3259"><path d="M24.500 42.500v6.200a6.200 6.200 0 1 1-6.200-6.200z" /><rect x="27" y="42.500" width="12.300" height="27" rx="6" /></g><g fill="#e3b34a"><rect x="42" y="42.500" width="27" height="12" rx="6" /><path d="M42 57.500h6.200a6.200 6.200 0 1 1-6.200 6.200z" /></g></svg>
        <b class="badge">18</b>
      </div>
      <div class="app">
        <svg viewBox="0 0 82 82"><rect x="0" y=".5" width="82" height="81" rx="19" fill="#181818" /><path d="M41 12.500H31.500a9.700 9.700 0 0 0 0 19.400H41z" fill="#ee3a36" /><path d="M41 12.500h9.500a9.700 9.700 0 0 1 0 19.400H41z" fill="#f0703c" /><path d="M41 31.900H31.500a9.700 9.700 0 0 0 0 19.400H41z" fill="#8a4cf2" /><circle cx="50.700" cy="41.500" r="9.700" fill="#4fb3f5" /><path d="M41 51.300H31.500a9.700 9.700 0 1 0 9.500 9.700z" fill="#56c878" /></svg>
      </div>
      <div class="app on">
        <svg viewBox="0 0 82 82"><rect x="0" y=".5" width="82" height="81" rx="19" fill="url(#gGreen)" /><path transform="translate(10 9.500) scale(2.620)" fill="#f4f6f4" d="M17.472 14.382c-.297-.149-1.758-.867-2.030-.967-.273-.099-.471-.148-.670.150-.197.297-.767.966-.940 1.164-.173.199-.347.223-.644.075-.297-.150-1.255-.463-2.390-1.475-.883-.788-1.480-1.761-1.653-2.059-.173-.297-.018-.458.130-.606.134-.133.298-.347.446-.520.149-.174.198-.298.298-.497.099-.198.050-.371-.025-.520-.075-.149-.669-1.612-.916-2.207-.242-.579-.487-.500-.669-.510-.173-.008-.371-.010-.570-.010-.198 0-.520.074-.792.372-.272.297-1.040 1.016-1.040 2.479 0 1.462 1.065 2.875 1.213 3.074.149.198 2.096 3.200 5.077 4.487.709.306 1.262.489 1.694.625.712.227 1.360.195 1.871.118.571-.085 1.758-.719 2.006-1.413.248-.694.248-1.289.173-1.413-.074-.124-.272-.198-.570-.347m-5.421 7.403h-.004a9.870 9.870 0 0 1-5.031-1.378l-.361-.214-3.741.982.998-3.648-.235-.374a9.860 9.860 0 0 1-1.510-5.260c.001-5.450 4.436-9.884 9.888-9.884 2.640 0 5.122 1.030 6.988 2.898a9.825 9.825 0 0 1 2.893 6.994c-.003 5.450-4.437 9.884-9.885 9.884m8.413-18.297A11.815 11.815 0 0 0 12.050 0C5.495 0 .160 5.335.157 11.892c0 2.096.547 4.142 1.588 5.945L.057 24l6.305-1.654a11.882 11.882 0 0 0 5.683 1.448h.005c6.554 0 11.890-5.335 11.893-11.893a11.821 11.821 0 0 0-3.480-8.413z" /></svg>
      </div>
      <div class="app">
        <svg viewBox="0 0 82 82"><path d="M4 2L58 -1Q62 -1 65 1.500L79 11Q81 13 81 17V73Q81 79 75 79.500L22 83Q18 83 15.500 79.500L2.500 61Q1 59 1 56V7Q1 3 4 2Z" fill="#fff" /><path d="M5 6L57 3Q61 3 63 4.500L76 13Q78 15 78 18V71Q78 75 74 75.500L23 79Q20 79 18 76.500L5.500 59Q4 57 4 54V8Z" fill="#000" /><path d="M10 9L56 6.500 70 14.500 23 17.500Z" fill="#fff" /><path d="M23 24L71 21Q73 21 73 23V67Q73 69 71 69.300L23 72Q20.500 72 20.500 70V27Q20.500 24.200 23 24Z" fill="#fff" /><path d="M29 32l11-1 15.500 25V34l-4-.8V30L65 29v3l-4 1v32l-5 .500L37.500 38v22l4.500 1v3l-12.500 1v-3l4-1.200V35.500L29 35z" fill="#000" /></svg>
      </div>
      <div class="app">
        <svg viewBox="0 0 82 82"><circle cx="41" cy="41" r="45" fill="url(#gSteam)" /><g clip-path="url(#round)"><path d="M-6 37L27 50 37 60 25 70 -8 54Z" fill="#f4f4f8" /><path d="M41 22L70 38 37 62 20 52Z" fill="url(#gArm)" /></g><circle cx="56" cy="29" r="17.500" fill="#a9a3c4" /><circle cx="56" cy="29" r="10.500" fill="none" stroke="#1b2a52" stroke-width="2.600" /><circle cx="56" cy="29" r="8" fill="#766e9c" /><circle cx="28" cy="57" r="13" fill="#f6f6fa" /><path d="M22 49a9.500 9.500 0 1 1 0 16" fill="none" stroke="#2a5d92" stroke-width="2.600" /></svg>
      </div>
      <i class="sep"></i>
      <div class="app trash">
        <svg viewBox="0 0 82 82"><path d="M6 3Q41 -9 77 3L69.500 78Q69 86 41 86T14.500 78Z" fill="url(#gCan)" /><ellipse cx="41.500" cy="4" rx="35.500" ry="9" fill="#4a4d50" /><path d="M10 4L16 -5 24 -3 30 -8 38 -4 43 -1 50 -7 58 -3 66 -5 72 4 66 9 58 12 50 9 40 13 30 11 20 12Z" fill="#e6e6e6" /><path d="M17 1l8 4-3 5zM45 4l8-7 4 7zM27 -4l6 6-8 2z" fill="#8c9096" /><path d="M28 3h7v4h-7z" fill="#35b4d8" /><path d="M46 5h8v4h-8z" fill="#7a4a3a" /><ellipse cx="41.500" cy="4" rx="35.500" ry="9" fill="none" stroke="#8f9295" stroke-width="1.200" /></svg>
      </div>
    </footer>
  </div>
</template>

<style>
body { background: #120030; overflow: hidden; }
</style>

<style scoped>
.desktop { position: relative; width: 3024px; height: 1964px; overflow: hidden; font-family: Inter, "Liberation Sans", sans-serif; }
.desktop svg { display: block; flex: none; overflow: visible; }
.wallpaper { position: absolute; left: 0; top: 0; }
.fit { display: inline-block; white-space: pre; flex: none; }

.menubar { position: relative; box-sizing: border-box; height: 74px; display: flex; align-items: center; padding: 0 32px 0 38px; background: linear-gradient(100deg, #2b238c 0, #2d2b8c 8%, #344190 27%, #3d5c8d 38%, #40778d 53%, #3f7c8e 70%, #37789a 85%, #2c6698 100%); color: #fff; font-size: 26px; font-weight: 500; line-height: 74px; }
.menubar .fit { text-shadow: 0 2px 6px rgba(0, 0, 0, .25); }
.apple { width: 32px; height: 32px; margin-bottom: 5px; }
.menus { display: flex; gap: 42px; margin-left: 38px; }
.bold { font-weight: 700; }
.status { display: flex; align-items: center; margin-left: auto; color: #e9f0f3; }
.s-gpt { width: 31px; height: 31px; }
.s-play { width: 28px; height: 28px; margin-left: 36px; }
.s-moon { width: 28px; height: 28px; margin-left: 42px; }
.temp { margin-left: 4px; }
.s-wifi { width: 34px; height: 26px; margin-left: 43px; }
.s-batt { width: 52px; height: 24px; margin-left: 37px; }
.s-cc { width: 27px; height: 28px; margin-left: 37px; }
.s-siri { width: 30px; height: 30px; margin-left: 37px; border-radius: 50%; background: conic-gradient(#f0507a, #e85aa8, #b070e0, #50a0f0, #60b0e8, #f08040, #f4a040, #f0507a); }
.date { margin-left: 31px; }
.time { margin-left: 15px; }

.back-window { position: absolute; left: 1px; top: 76px; width: 3020px; height: 1746px; box-sizing: border-box; border: 2px solid #3a3b3f; border-top-color: #66676b; border-radius: 22px; background: linear-gradient(#1c1d20, #17181a 90%, #0c0d0e); box-shadow: 0 0 0 1px #000, 0 20px 50px rgba(0, 0, 0, .5); overflow: hidden; }
.back-field { position: absolute; left: 923px; top: 10px; width: 1348px; height: 20px; border-radius: 8px; background: #3f4043; }
.back-knob { position: absolute; right: 12px; top: 12px; width: 12px; height: 14px; border-radius: 6px; background: #a9a9ac; }
.mid-window { position: absolute; left: 120px; top: 157px; width: 2895px; height: 1656px; box-sizing: border-box; border: 2px solid #242528; border-radius: 16px; }

.window { position: absolute; left: 16px; top: 92px; width: 2992px; height: 1714px; display: flex; flex-direction: column; border-radius: 20px; background: #35363a; overflow: hidden; box-shadow: 0 0 0 1px #000; }
.toolbar { height: 104px; flex: none; box-sizing: border-box; display: flex; align-items: center; padding: 0 39px 0 40px; border-top: 2px solid #737477; }
.light { width: 24px; height: 24px; border-radius: 50%; margin-right: 16px; flex: none; }
.red { background: #ed6a5f; }
.yellow { background: #f5bf4f; }
.green { background: #62c655; margin-right: 52px; }
.t-side { width: 40px; height: 32px; margin-bottom: 4px; }
.t-div { width: 2px; height: 36px; margin-left: 13px; background: #46474b; }
.t-chev { width: 16px; height: 10px; margin-left: 12px; }
.t-back { width: 18px; height: 30px; margin: 0 0 2px 50px; }
.t-fwd { width: 18px; height: 30px; margin: 0 0 2px 54px; }
.address { width: 1211px; height: 56px; margin: 0 0 2px 472px; box-sizing: border-box; display: flex; align-items: center; border: 2px solid #4b4c50; border-radius: 15px; }
.a-page { width: 24px; height: 28px; margin-left: 14px; }
.url { margin-left: 101px; color: #fff; font-size: 26.500px; font-weight: 500; line-height: 52px; }
.a-trans { width: 39px; height: 29px; margin: 2px 0 0 53px; }
.a-reload { width: 24px; height: 28px; margin-left: 12px; }
.t-share { width: 30px; height: 38px; margin: 0 0 4px 671px; }
.t-plus { width: 28px; height: 28px; margin: 0 0 4px 44px; }
.t-tabs { width: 36px; height: 36px; margin: 0 0 4px 43px; }

.tabs { height: 57px; flex: none; display: flex; box-sizing: border-box; border-bottom: 2px solid #08080a; }
.tab { width: 748px; flex: none; box-sizing: border-box; display: flex; align-items: center; background: #1d1e20; border-top: 1px solid #000; border-right: 2px solid #424347; color: #98989b; font-size: 22px; line-height: 56px; }
.tab:last-child { border-right: 0; }
.tab .fit { margin-top: 1px; }
.t1 { padding-left: 322px; }
.t2 { padding-left: 226px; }
.t3 { width: 750px; padding-left: 48px; background: #35363a; border-top-color: #35363a; color: #fff; font-weight: 500; }
.t4 { width: 746px; padding-left: 100px; }
.fav36 { width: 36px; height: 36px; margin-right: 8px; }
.fav-replit { width: 18px; height: 23px; margin-right: 16px; }
.fav-r { flex: none; width: 32px; height: 32px; margin-right: 10px; border-radius: 7px; background: #9090a0; text-align: center; line-height: 32px; font-size: 21px; font-weight: 600; }
.fav-b { flex: none; width: 32px; height: 32px; margin-right: 11px; background: #f5f1ee; color: #222; text-align: center; font: 15px/32px "Liberation Serif", serif; }

.page { flex: 1; background: linear-gradient(135deg, #f8fafc 0%, #f6f8fb 45%, #eff4f7 100%); padding: 127px 0 0 985px; }
.card { position: relative; box-sizing: border-box; width: 1023px; height: 1298px; border: 2px solid #e1e8ee; border-radius: 48px; background: #e7f1f2; padding: 0 32px 0 31px; display: flex; flex-direction: column; box-shadow: 0 40px 80px -20px rgba(0, 0, 0, .22), 0 0 40px rgba(0, 0, 0, .03); }
.card-head { height: 128px; flex: none; display: flex; align-items: center; justify-content: space-between; font-family: "Liberation Serif", serif; }
.logo { margin: 0 0 2px 16px; font-size: 47px; color: #161616; }
.brand { font-size: 30px; font-weight: 700; color: #2c7080; margin: 1px 1px 0 0; }
.scroller { height: 1002px; flex: none; overflow: hidden; }
.bubble { width: 813px; box-sizing: border-box; padding: 1px 0 0 23px; background: #e1ede8; color: #2c7080; font: 28px/44px Lato, "Open Sans", sans-serif; }
.line { height: 44px; display: flex; align-items: center; }
.indent { padding-left: 29px; }
.bullet { width: 37px; margin-left: -1px; padding-right: 1px; box-sizing: border-box; font-size: 30px; }
.thumb { position: absolute; left: 1005px; top: 904px; width: 10px; height: 52px; border-radius: 5px; background: #c7cfd1; }
.composer { height: 100px; flex: none; box-sizing: border-box; margin: 32px -1px 0 0; display: flex; align-items: center; border: 2px solid #f1f3f5; border-radius: 16px; background: #fff; box-shadow: 0 2px 4px rgba(0, 0, 0, .05); }
.clip { width: 38px; height: 38px; margin-left: 20px; }
.placeholder { margin: 0 0 0 14px; color: #9ca3af; font: 32px/48px Lato, "Open Sans", sans-serif; }
.mic { width: 24px; height: 32px; margin-left: 389px; }
.send { width: 56px; height: 56px; margin-left: 36px; border-radius: 12px; background: #98b8c0; display: flex; align-items: center; justify-content: center; }
.send svg { width: 33px; height: 33px; }

.dock { position: absolute; left: 90px; top: 1824px; width: 2845px; height: 131px; box-sizing: border-box; display: flex; gap: 25.090px; padding: 17px 0 0 17px; border: 2px solid #463c6e; border-color: rgba(140, 130, 200, .4); border-radius: 38px; background: linear-gradient(95deg, #29145c 0, #24246f 5%, #222c90 11%, #1f3580 18%, #1e4674 22%, #1d2250 25.500%, #22134c 31%, #1f1440 50%, #221446 88%, #212058 93%, #1e2f80 96%, #1d3088 100%); background-clip: padding-box; box-shadow: 0 0 2px 1px rgba(0, 0, 0, .5), 0 0 50px 6px rgba(0, 0, 0, .18); }
.defs { position: absolute; }
.app { position: relative; width: 82px; height: 82px; flex: none; }
.app svg { width: 82px; height: 82px; filter: drop-shadow(0 1px 1px rgba(0, 0, 0, .35)); }
.on::after { content: ""; position: absolute; left: 37px; top: 99px; width: 8px; height: 8px; border-radius: 50%; background: #a597d0; }
.petal { mix-blend-mode: multiply; opacity: .88; }
.cal-m { font: 600 17px Inter, sans-serif; fill: #fff; }
.cal-d { font: 300 50px Inter, sans-serif; fill: #222; }
.adobe { font: 700 50px "Noto Sans", sans-serif; }
.badge { position: absolute; left: 54px; top: -11px; width: 40px; height: 40px; border-radius: 50%; background: #e8533f; color: #fff; font-size: 21px; font-weight: 400; line-height: 40px; text-align: center; }
.sep { width: 2px; height: 94px; margin-left: 12px; flex: none; background: #58579a; }
.trash { margin-left: 9px; }
</style>
